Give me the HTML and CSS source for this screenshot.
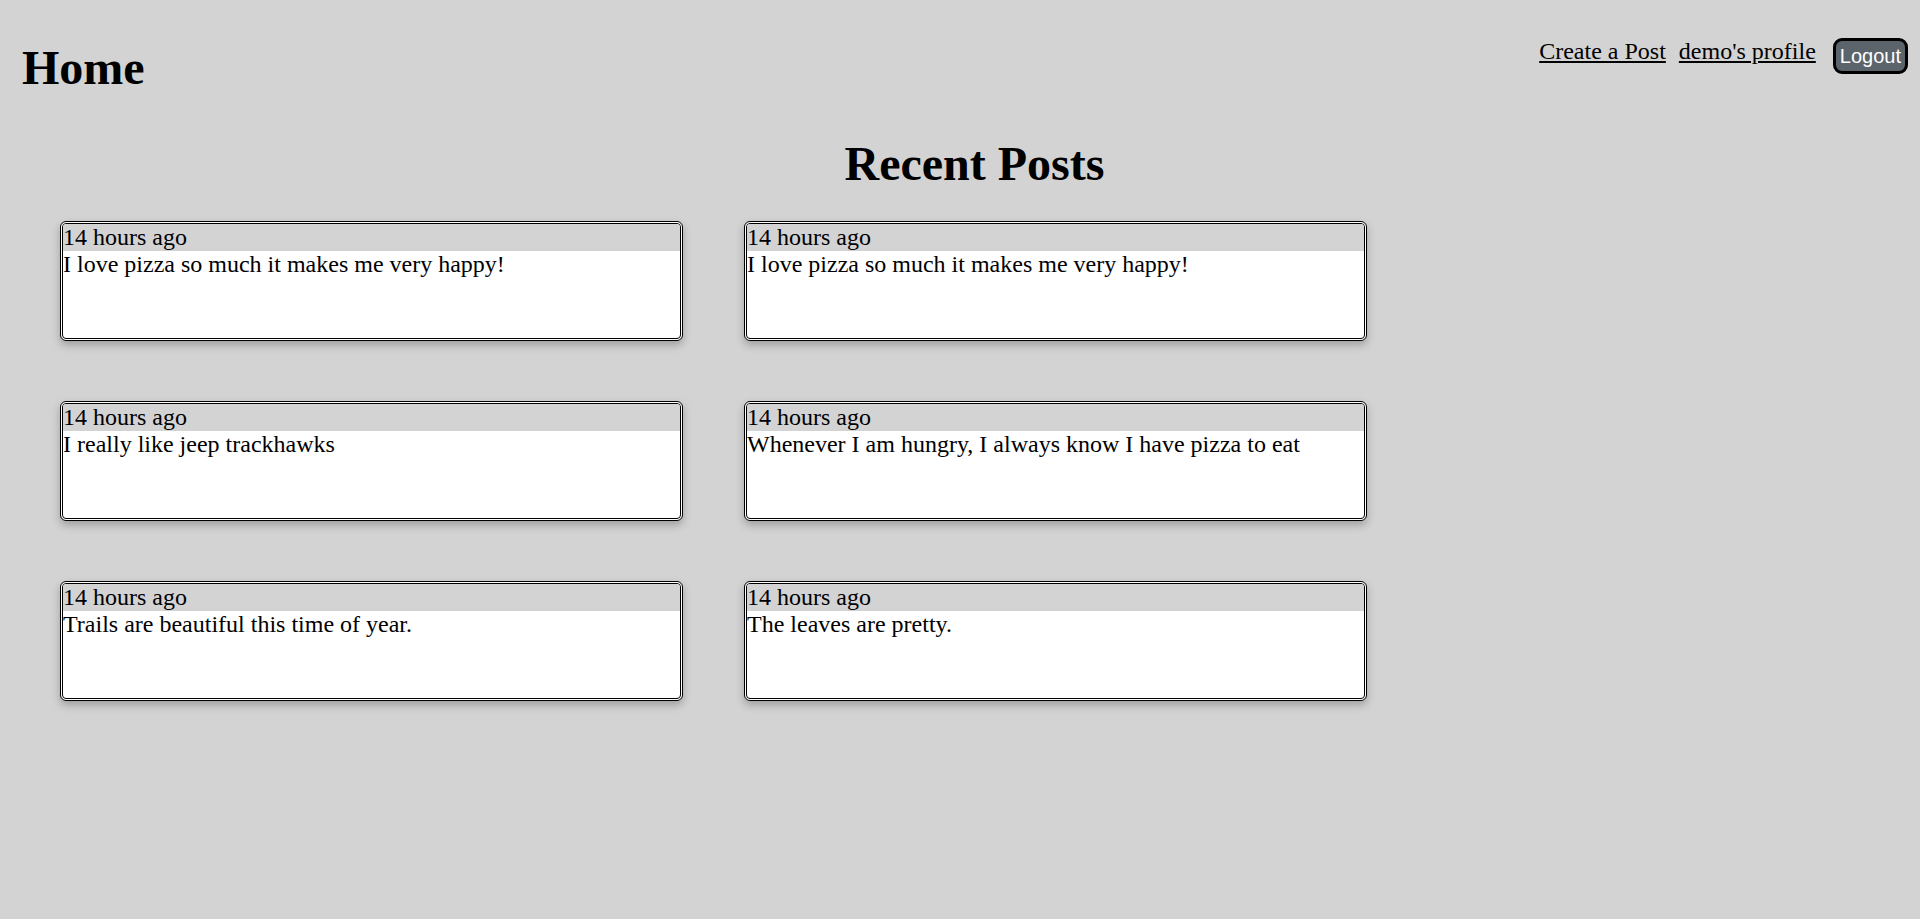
FILE: index.html
```html
<!DOCTYPE html>
<html>
<head>
<meta charset="utf-8">
<title>Home</title>
<link rel="stylesheet" href="styles.css">
</head>
<body>
<header class="topbar">
  <h1 class="home-title">Home</h1>
  <nav class="nav">
    <a class="nav-link first" href="#">Create a Post</a>
    <a class="nav-link second" href="#">demo's profile</a>
    <button class="logout">Logout</button>
  </nav>
</header>
<h2 class="section-title">Recent Posts</h2>
<div class="posts">
  <div class="card"><div class="card-time">14 hours ago</div><div class="card-text">I love pizza so much it makes me very happy!</div></div>
  <div class="card"><div class="card-time">14 hours ago</div><div class="card-text">I love pizza so much it makes me very happy!</div></div>
  <div class="card"><div class="card-time">14 hours ago</div><div class="card-text">I really like jeep trackhawks</div></div>
  <div class="card"><div class="card-time">14 hours ago</div><div class="card-text">Whenever I am hungry, I always know I have pizza to eat</div></div>
  <div class="card"><div class="card-time">14 hours ago</div><div class="card-text">Trails are beautiful this time of year.</div></div>
  <div class="card"><div class="card-time">14 hours ago</div><div class="card-text">The leaves are pretty.</div></div>
</div>
</body>
</html>
```

FILE: styles.css
```css
html, body {
  margin: 0;
  padding: 0;
}
body {
  background: #d3d3d3;
  font-family: "Liberation Serif", "Times New Roman", serif;
  color: #000;
  min-height: 919px;
}
.topbar {
  display: flex;
  justify-content: space-between;
  align-items: flex-start;
  padding: 0 12px 0 22px;
}
.home-title {
  margin: 40px 0 0;
  font-size: 48px;
  line-height: 55px;
  font-weight: bold;
}
.nav {
  display: flex;
  align-items: flex-start;
}
.nav-link {
  font-size: 24px;
  line-height: 28px;
  color: #000;
  text-decoration: underline;
  margin-top: 37px;
}
.nav-link.first {
  margin-right: 13px;
}
.nav-link.second {
  margin-right: 17px;
}
.logout {
  margin-top: 38px;
  height: 36px;
  padding: 0 4px;
  background: #5b636b;
  color: #fff;
  border: 3px solid #000;
  border-radius: 9px;
  font-family: "Liberation Sans", Arial, sans-serif;
  font-size: 20px;
  line-height: 28px;
}
.section-title {
  margin: 41px 0 30px;
  padding-left: 29px;
  text-align: center;
  font-size: 48px;
  line-height: 55px;
  font-weight: bold;
}
.posts {
  display: grid;
  grid-template-columns: 623px 623px;
  column-gap: 61px;
  row-gap: 60px;
  padding-left: 60px;
}
.card {
  box-sizing: border-box;
  height: 120px;
  background: #fff;
  border: 3px double #000;
  border-radius: 6px;
  box-shadow: 0 4px 8px rgba(0, 0, 0, 0.25);
  overflow: hidden;
  font-size: 24px;
}
.card-time {
  background: #d3d3d3;
  line-height: 27px;
  height: 27px;
}
.card-text {
  line-height: 27px;
}
```
